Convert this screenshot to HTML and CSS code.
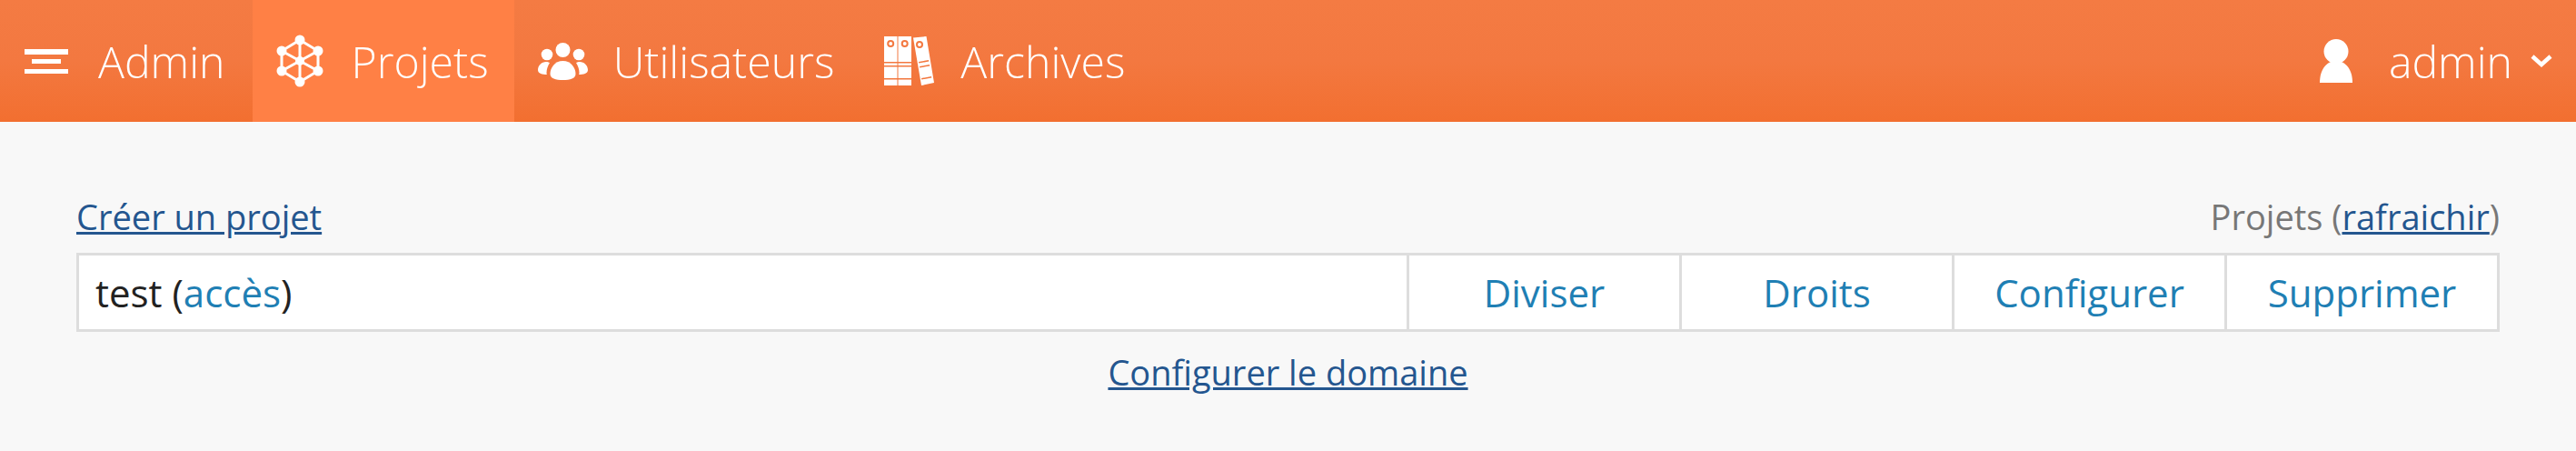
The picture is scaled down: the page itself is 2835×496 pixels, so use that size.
FILE: index.html
```html
<!DOCTYPE html>
<html lang="fr">
<head>
    <meta charset="UTF-8">
    <title>Projets</title>
    <link rel="stylesheet" href="styles.css">
</head>
<body>
    <nav class="topbar">
        <a class="nav-item nav-admin">
            <svg class="nav-icon icon-menu" viewBox="0 0 48 27"><path d="M0 0h48v6H0zM8 11h32v5H8zM0 22h48v5H0z"/></svg>
            <span>Admin</span>
        </a>
        <a class="nav-item nav-active">
            <svg class="nav-icon icon-net" viewBox="0 0 52 58">
                <path class="net-lines" d="M26 6 46 18V40L26 52 6 40V18ZM26 6V52M6 18 46 40M46 18 6 40"/>
                <circle cx="26" cy="6" r="5.500"/><circle cx="46" cy="18" r="5.500"/><circle cx="46" cy="40" r="5.500"/>
                <circle cx="26" cy="52" r="5.500"/><circle cx="6" cy="40" r="5.500"/><circle cx="6" cy="18" r="5.500"/>
                <circle cx="26" cy="29" r="5"/>
            </svg>
            <span>Projets</span>
        </a>
        <a class="nav-item nav-users">
            <svg class="nav-icon icon-users" viewBox="0 0 55 41">
                <circle cx="27.500" cy="8" r="8"/><circle cx="10" cy="13" r="6.300"/><circle cx="45" cy="13" r="6.300"/>
                <path d="M27.500 20c9 0 14 8 14 14 0 5.500-6 7-14 7s-14-1.500-14-7c0-6 5-14 14-14Z"/>
                <path d="M9 21c1.500 0 3 .5 4 1-2 3-3.500 7-3.500 11 0 .5 0 1.500.5 2C5 35 0 34 0 30c0-5 4-9 9-9ZM46 21c-1.500 0-3 .5-4 1 2 3 3.500 7 3.500 11 0 .5 0 1.500-.5 2 5 0 10-1 10-5 0-5-4-9-9-9Z"/>
            </svg>
            <span>Utilisateurs</span>
        </a>
        <a class="nav-item">
            <svg class="nav-icon icon-books" viewBox="0 0 55 54" fill-rule="evenodd">
                <path d="M0 0h14.500v54H0zM3.200 8a4 4 0 1 0 8 0a4 4 0 1 0-8 0ZM5.200 8a2 2 0 1 1 4 0a2 2 0 1 1-4 0ZM0 28v1.600h14.500V28ZM0 32v1.600h14.500V32ZM0 46v1.600h14.500V46Z"/>
                <path d="M15.500 0H30v54H15.500zM18.700 8a4 4 0 1 0 8 0a4 4 0 1 0-8 0ZM20.700 8a2 2 0 1 1 4 0a2 2 0 1 1-4 0ZM15.500 28v1.600H30V28ZM15.500 32v1.600H30V32ZM15.500 46v1.600H30V46Z"/>
                <path d="M32 1.500 46.500 0 55 51 41 54ZM35 9a4 4 0 1 0 8 0a4 4 0 1 0-8 0ZM37 9a2 2 0 1 1 4 0a2 2 0 1 1-4 0ZM38 28l11-2 .3 1.500-11 2ZM39 33l11-2 .3 1.500-11 2ZM41 46l11-2 .3 1.500-11 2Z"/>
            </svg>
            <span>Archives</span>
        </a>
        <a class="nav-item nav-user">
            <svg class="nav-icon icon-user" viewBox="0 0 36 48">
                <circle cx="18" cy="13.500" r="13.500"/>
                <path d="M18 24c11 0 18 10 18 24H0c0-14 7-24 18-24Z"/>
            </svg>
            <span>admin</span>
            <svg class="icon-chevron" viewBox="0 0 24 14"><path d="M2 2 12 11 22 2"/></svg>
        </a>
    </nav>

    <main class="content">
        <div class="list-head">
            <a class="link" href="#">Créer un projet</a>
            <span class="list-title">Projets (<a class="link" href="#">rafraichir</a>)</span>
        </div>
        <table class="projects">
            <tr>
                <td class="project-name">test (<a href="#">accès</a>)</td>
                <td class="action"><a href="#">Diviser</a></td>
                <td class="action"><a href="#">Droits</a></td>
                <td class="action"><a href="#">Configurer</a></td>
                <td class="action"><a href="#">Supprimer</a></td>
            </tr>
        </table>
        <div class="list-foot">
            <a class="link" href="#">Configurer le domaine</a>
        </div>
    </main>
</body>
</html>
```

FILE: styles.css
```css
* {
    box-sizing: border-box;
}

body {
    margin: 0;
    background-color: #f8f8f8;
    font-family: "Open Sans", "Noto Sans", sans-serif;
    font-size: 38px;
    color: #222;
}

a {
    text-decoration: none;
}

/* barre du haut */
.topbar {
    display: flex;
    height: 134px;
    background: linear-gradient(180deg, #f47b43 0%, #f37840 50%, #f26f30 100%);
}

.nav-item {
    display: flex;
    align-items: center;
    gap: 29px;
    padding: 0 29px 0 26px;
    font-size: 48.2px;
    font-weight: 300;
    color: #fff;
}

.nav-admin {
    padding-left: 27px;
    padding-right: 30px;
    gap: 33px;
}

.nav-active {
    gap: 31px;
    padding-right: 28px;
    background-color: #ff8045;
}

.nav-users {
    gap: 28px;
}

.nav-user {
    margin-left: auto;
    gap: 40px;
    padding-right: 26px;
}

.nav-icon {
    display: block;
    flex: none;
    fill: #fff;
}

.icon-menu {
    width: 48px;
    height: 27px;
}

.icon-net {
    width: 52px;
    height: 58px;
}

.net-lines {
    fill: none;
    stroke: #fff;
    stroke-width: 3;
}

.icon-users {
    width: 55px;
    height: 41px;
}

.icon-books {
    width: 55px;
    height: 54px;
}

.icon-user {
    width: 36px;
    height: 48px;
}

.icon-chevron {
    width: 24px;
    height: 14px;
    margin-left: -20px;
    fill: none;
    stroke: #fff;
    stroke-width: 4.5;
}

/* liste des projets */
.content {
    padding: 77px 84px 0;
}

.link {
    color: #24568f;
    text-decoration: underline;
}

.list-head {
    display: flex;
    justify-content: space-between;
    height: 67px;
    line-height: 54px;
}

.list-title {
    color: #777;
}

.projects {
    width: 100%;
    table-layout: fixed;
    border-collapse: collapse;
    background-color: #fff;
}

.projects td {
    height: 84px;
    padding: 0;
    border: 3px solid #ddd;
    font-size: 42px;
}

.projects td a {
    color: #1f7fb4;
}

.projects .project-name {
    padding-left: 18px;
}

.action {
    width: 300px;
    text-align: center;
}

.list-foot {
    margin-top: 17px;
    line-height: 54px;
    text-align: center;
}
```
